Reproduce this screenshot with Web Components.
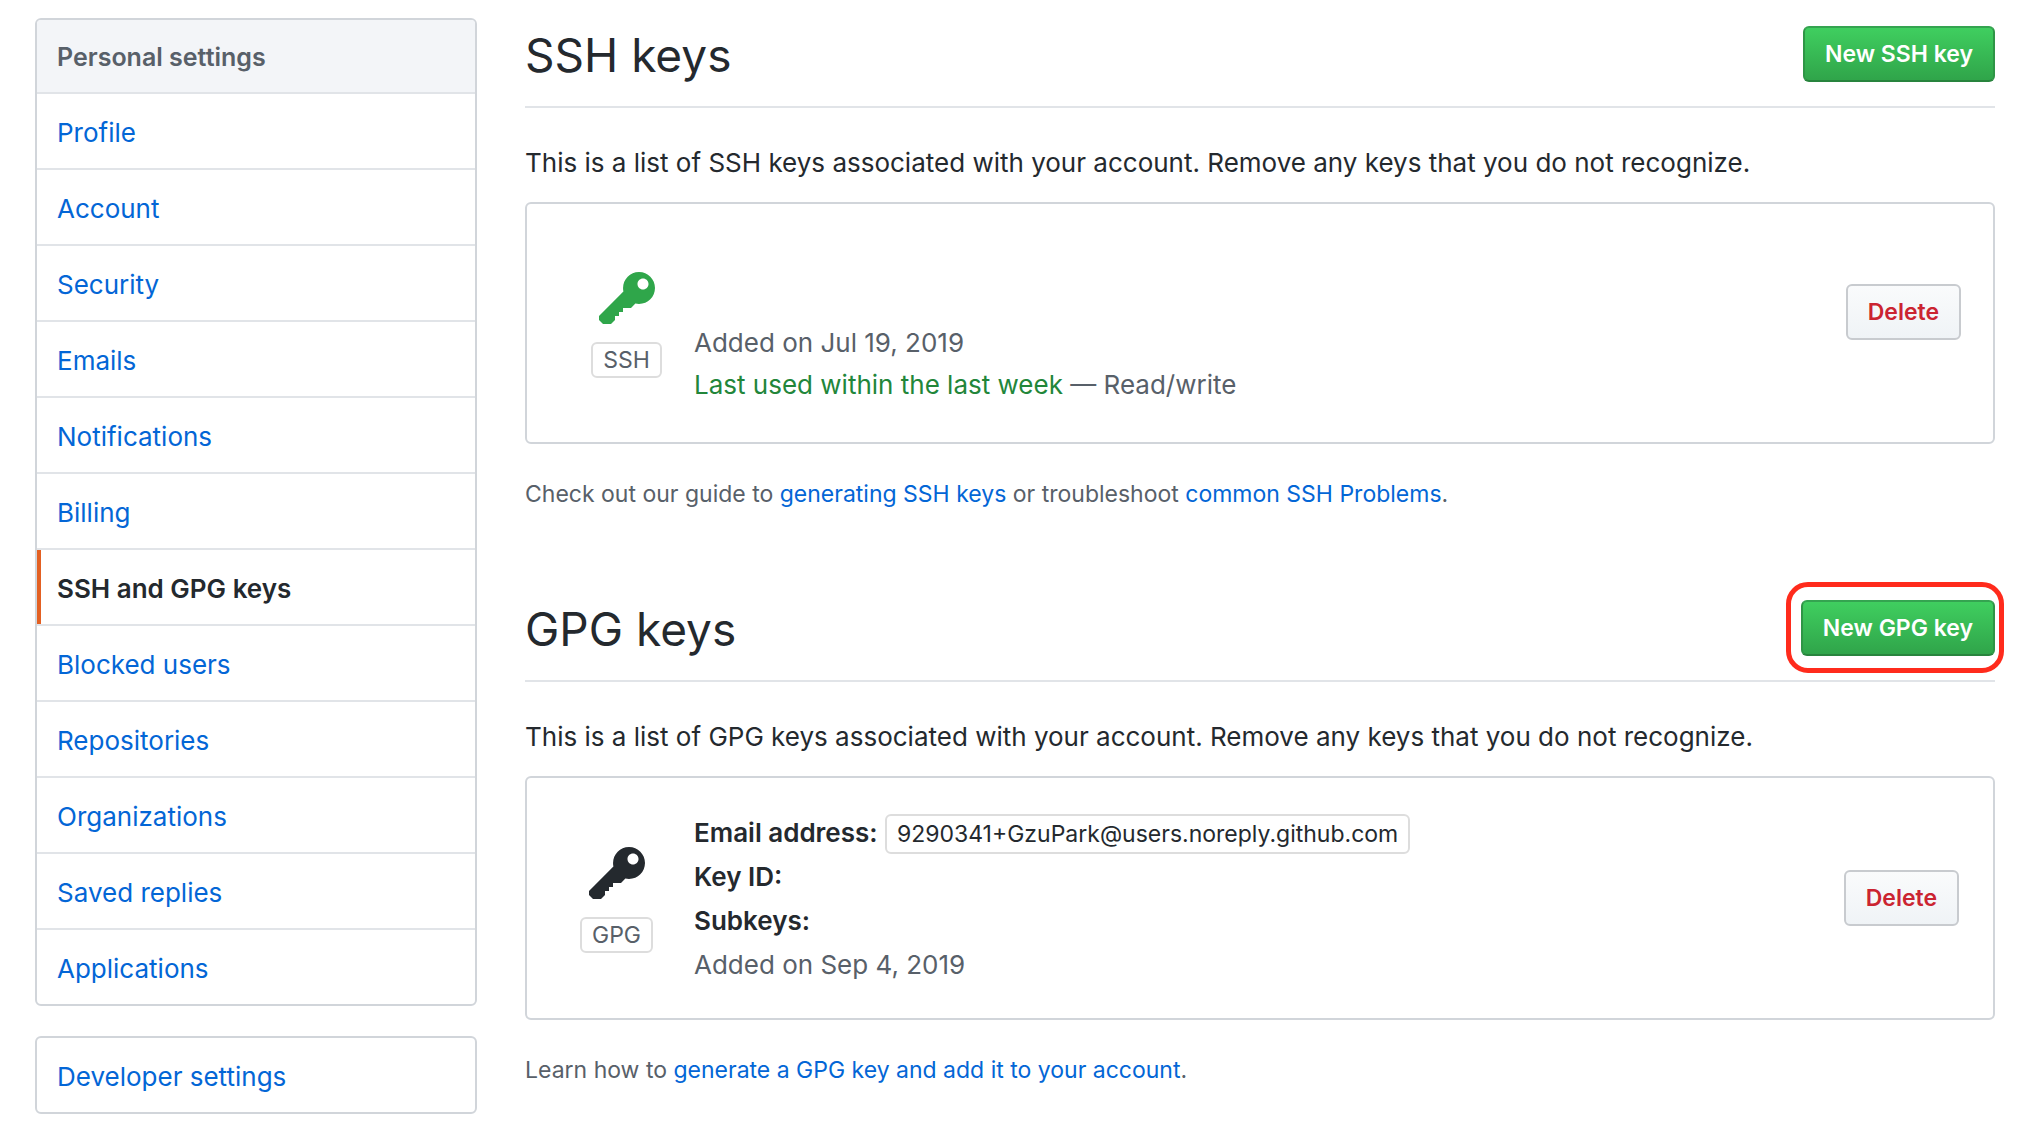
<!DOCTYPE html>
<html lang="en">
<head>
<meta charset="utf-8">
<meta name="viewport" content="width=device-width, initial-scale=1">
<title>SSH and GPG keys</title>
<style>
  body {
    margin: 0;
    background: #fff;
    color: #24292e;
    font: 26px/42px Inter, "Liberation Sans", sans-serif;
    --small: 23px;
    --link: #0366d6;
    --muted: #586069;
    --border: #d1d5da;
    --border-light: #e1e4e8;
  }
  a { color: var(--link); text-decoration: none; }
  a:hover { text-decoration: underline; }
  .used { color: #22863a; }
</style>
</head>
<body>
<settings-page>
  <settings-menu slot="menu" label="Personal settings">
    <span slot="heading">Personal settings</span>
    <menu-item href="#profile">Profile</menu-item>
    <menu-item href="#account">Account</menu-item>
    <menu-item href="#security">Security</menu-item>
    <menu-item href="#emails">Emails</menu-item>
    <menu-item href="#notifications">Notifications</menu-item>
    <menu-item href="#billing">Billing</menu-item>
    <menu-item href="#keys" selected>SSH and GPG keys</menu-item>
    <menu-item href="#blocked">Blocked users</menu-item>
    <menu-item href="#repositories">Repositories</menu-item>
    <menu-item href="#organizations">Organizations</menu-item>
    <menu-item href="#replies">Saved replies</menu-item>
    <menu-item href="#applications">Applications</menu-item>
  </settings-menu>
  <settings-menu slot="menu" label="Developer settings">
    <menu-item href="#developer">Developer settings</menu-item>
  </settings-menu>

  <key-section>
    <span slot="title">SSH keys</span>
    <app-button slot="action" kind="primary">New SSH key</app-button>
    <span slot="intro">This is a list of SSH keys associated with your account. Remove any keys that you do not recognize.</span>
    <key-card kind="ssh">
      <span slot="type">SSH</span>
      <key-line muted>Added on Jul 19, 2019</key-line>
      <key-line muted><span class="used">Last used within the last week</span> — Read/write</key-line>
    </key-card>
    <span slot="help">Check out our guide to <a href="#generating">generating SSH keys</a> or troubleshoot <a href="#problems">common SSH Problems</a>.</span>
  </key-section>

  <key-section>
    <span slot="title">GPG keys</span>
    <app-button slot="action" kind="primary" marked>New GPG key</app-button>
    <span slot="intro">This is a list of GPG keys associated with your account. Remove any keys that you do not recognize.</span>
    <key-card kind="gpg">
      <span slot="type">GPG</span>
      <key-line><b>Email address:</b> <email-tag>9290341+GzuPark@users.noreply.github.com</email-tag></key-line>
      <key-line><b>Key ID:</b></key-line>
      <key-line><b>Subkeys:</b></key-line>
      <key-line muted>Added on Sep 4, 2019</key-line>
    </key-card>
    <span slot="help">Learn how to <a href="#gpg">generate a GPG key and add it to your account</a>.</span>
  </key-section>
</settings-page>

<script>
  const define = (name, html, setup) => {
    const template = document.createElement('template');
    template.innerHTML = html;
    customElements.define(name, class extends HTMLElement {
      constructor() {
        super();
        this.attachShadow({ mode: 'open' }).append(template.content.cloneNode(true));
      }
      connectedCallback() {
        if (setup) setup(this, this.shadowRoot);
      }
    });
  };

  define('settings-page', `
    <style>
      :host { display: flex; gap: 48px; align-items: flex-start; padding: 18px 24px 24px 35px; }
      aside { flex: 0 0 442px; display: grid; gap: 30px; }
      main { flex: 1; min-width: 0; display: grid; gap: 88px; padding-top: 8px; }
    </style>
    <aside><slot name="menu"></slot></aside>
    <main><slot></slot></main>`);

  define('settings-menu', `
    <style>
      :host { display: block; border: 2px solid var(--border); border-radius: 6px; overflow: hidden; }
      ::slotted([slot=heading]) {
        display: block; padding: 16px 20px 14px; background: #f3f5f8;
        color: var(--muted); font-size: 25px; font-weight: 600;
      }
    </style>
    <nav><slot name="heading"></slot><slot></slot></nav>`,
    (el, root) => root.querySelector('nav').setAttribute('aria-label', el.getAttribute('label')));

  define('menu-item', `
    <style>
      :host { display: block; border-top: 2px solid var(--border-light); }
      :host(:only-child) { border-top: 0; }
      a { display: block; padding: 18px 20px 14px; color: var(--link); text-decoration: none; }
      a:hover { background: #f6f8fa; }
      :host([selected]) a { color: #24292e; font-weight: 600; box-shadow: inset 4px 0 #e36022; }
    </style>
    <a><slot></slot></a>`,
    (el, root) => {
      const link = root.querySelector('a');
      link.href = el.getAttribute('href');
      if (el.hasAttribute('selected')) link.setAttribute('aria-current', 'page');
    });

  define('app-button', `
    <style>
      :host { display: block; position: relative; flex: none; }
      button {
        display: block; box-sizing: border-box; height: 56px; padding: 0 20px;
        border: 2px solid #c8cbcf; border-radius: 6px; cursor: pointer;
        background: #eff3f6 linear-gradient(#fafbfc, #eff3f6) border-box;
        color: #cb2431; font: 600 var(--small)/36px Inter, "Liberation Sans", sans-serif;
        white-space: nowrap;
      }
      :host([kind=primary]) button {
        color: #fff; border-color: #34a450 #2e9546 #28843d;
        background: #2fa349 linear-gradient(#40d060, #2fa349) border-box;
      }
      :host([marked])::after {
        content: ""; position: absolute; inset: -18px -9px -17px -15px;
        border: 5px solid #ff2b1c; border-radius: 22px; pointer-events: none;
      }
    </style>
    <button type="button"><slot></slot></button>`);

  define('key-section', `
    <style>
      :host { display: block; }
      header {
        display: flex; justify-content: space-between; align-items: flex-start;
        padding-bottom: 24px; border-bottom: 2px solid var(--border-light);
      }
      h2 { margin: 0; font-size: 46px; font-weight: 400; line-height: 58px; margin-bottom: -2px; }
      p { margin: 34px 0 18px; }
      .help { margin: 32px 0 0; font-size: var(--small); line-height: 36px; color: var(--muted); }
    </style>
    <section>
      <header><h2><slot name="title"></slot></h2><slot name="action"></slot></header>
      <p><slot name="intro"></slot></p>
      <slot></slot>
      <p class="help"><slot name="help"></slot></p>
    </section>`);

  define('key-card', `
    <style>
      :host {
        --key: #24292e; --type-inset: 12px; --end: 34px; --line: 44px;
        display: flex; align-items: center; box-sizing: border-box; min-height: 242px;
        padding: 31px var(--end) 31px 0; border: 2px solid var(--border); border-radius: 6px;
      }
      :host([kind=ssh]) { --key: #2fa64a; --type-inset: 32px; --end: 32px; --line: 42px; }
      .type {
        flex: 0 0 167px; box-sizing: border-box; padding-left: var(--type-inset);
        display: flex; flex-direction: column; align-items: center; gap: 10px;
      }
      svg { display: block; width: 56px; height: 64px; fill: var(--key); }
      ::slotted([slot=type]) {
        padding: 0 10px; border: 2px solid #ddd; border-radius: 6px;
        font-size: var(--small); line-height: 32px; color: var(--muted);
      }
      .details { flex: 1; min-width: 0; padding-top: 2px; line-height: var(--line); }
      :host([kind=ssh]) .details { padding-top: 82px; }
      :host([kind=ssh]) app-button { margin-bottom: 22px; }
    </style>
    <div class="type">
      <svg viewBox="0 0 14 16" aria-hidden="true"><path fill-rule="evenodd" d="M12.83 2.17C12.08 1.42 11.14 1.03 10 1c-1.13.03-2.08.42-2.83 1.17S6.04 3.86 6.01 5c0 .3.03.59.09.89L0 12v1l1 1h2l1-1v-1h1v-1h1v-1h2l1.09-1.11c.3.08.59.11.91.11 1.14-.03 2.08-.42 2.83-1.17S13.97 6.14 14 5c-.03-1.14-.42-2.08-1.17-2.83zM11 5.38c-.77 0-1.38-.61-1.38-1.38 0-.77.61-1.38 1.38-1.38.77 0 1.38.61 1.38 1.38 0 .77-.61 1.38-1.38 1.38z"/></svg>
      <slot name="type"></slot>
    </div>
    <div class="details"><slot></slot></div>
    <app-button>Delete</app-button>`);

  define('key-line', `
    <style>
      :host { display: block; }
      :host([muted]) { color: var(--muted); }
      ::slotted(b) { font-weight: 600; }
    </style>
    <slot></slot>`);

  define('email-tag', `
    <style>
      :host {
        display: inline-block; padding: 0 10px; border: 2px solid #ddd; border-radius: 6px;
        font-size: var(--small); line-height: 36px;
      }
    </style>
    <slot></slot>`);
</script>
</body>
</html>
